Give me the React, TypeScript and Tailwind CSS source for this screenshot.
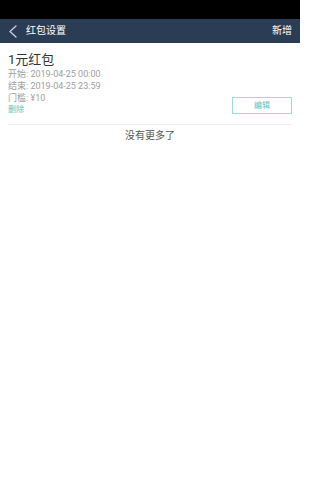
const font = { fontFamily: 'Roboto, "Noto Sans CJK SC", sans-serif' };

function BackIcon() {
  return (
    <svg width="10" height="13" viewBox="0 0 10 13" fill="none">
      <polyline points="8,1 2,6.5 8,12" stroke="#c9d1db" strokeWidth="1.3" strokeLinecap="round" strokeLinejoin="round" />
    </svg>
  );
}

export default function App() {
  return (
    <div className="w-[300px] h-[500px] bg-white" style={font}>
      <div className="h-[19px] bg-black" />
      <div className="h-[24px] bg-[#2b3d54] flex items-center pl-[8px] pr-[8px] text-white">
        <BackIcon />
        <span className="ml-[8px] text-[10px] leading-[12px]">红包设置</span>
        <span className="ml-auto text-[10px] leading-[12px]">新增</span>
      </div>
      <div className="px-[8px]">
        <div className="flex items-end pt-[9px] pb-[8px] border-b border-[#eeeeee]">
          <div className="flex-1 flex flex-col">
            <span className="text-[13px] leading-[16px] text-[#333]">1元红包</span>
            <span className="text-[9px] leading-[12px] text-[#a0a0a0]">开始: 2019-04-25 00:00</span>
            <span className="text-[9px] leading-[12px] text-[#a0a0a0]">结束: 2019-04-25 23:59</span>
            <span className="text-[9px] leading-[12px] text-[#a0a0a0]">门槛: ¥10</span>
            <span className="text-[8px] leading-[12px] text-[#5cc6b8]">删除</span>
          </div>
          <button className="mb-[2px] w-[60px] h-[17px] border border-[#9fdcd3] text-[#5cc6b8] text-[8px] leading-none flex items-center justify-center">
            编辑
          </button>
        </div>
        <div className="text-center text-[10px] leading-[22px] text-[#555]">没有更多了</div>
      </div>
    </div>
  );
}
